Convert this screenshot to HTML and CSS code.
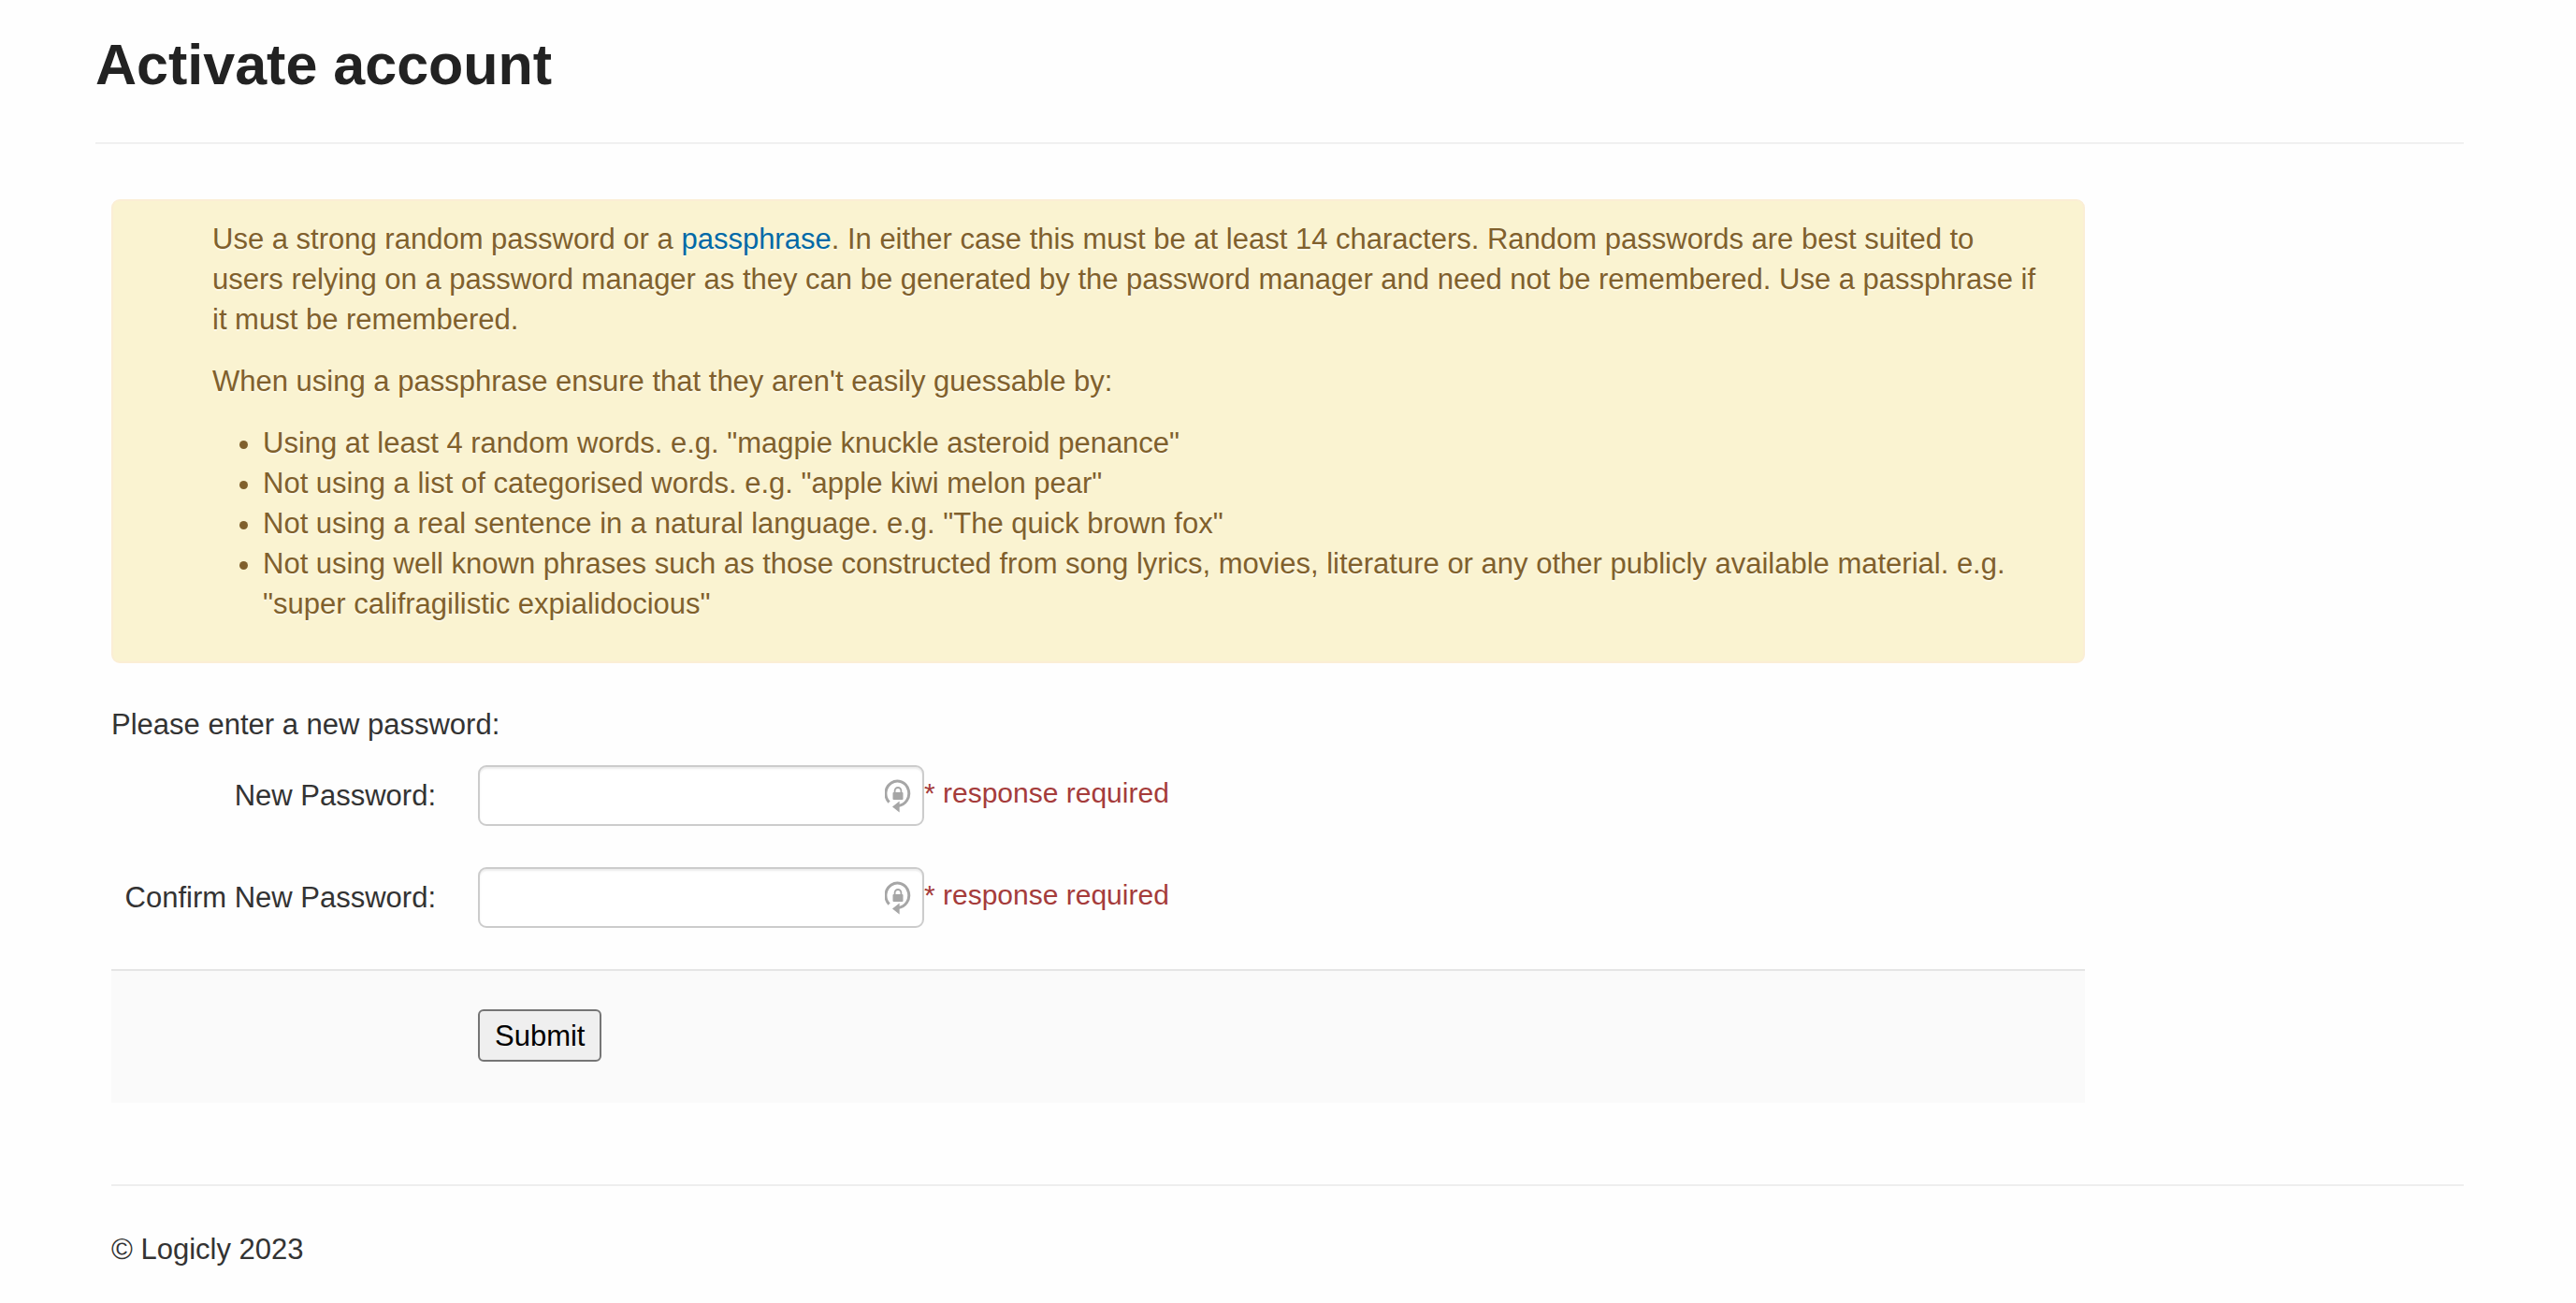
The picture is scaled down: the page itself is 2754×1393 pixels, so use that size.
FILE: index.html
```html
<!DOCTYPE html>
<html lang="en">
<head>
<meta charset="utf-8">
<meta name="viewport" content="width=device-width, initial-scale=1">
<title>Activate account</title>
<link rel="stylesheet" href="styles.css">
</head>
<body>
<svg class="sprite" aria-hidden="true">
  <symbol id="lock-cycle" viewBox="0 0 28 36">
    <path d="M4.6 24.6A12.4 13.2 0 1 1 14 28.4" fill="none" stroke="currentColor" stroke-width="3"/>
    <path d="M8 29.5 15.6 23.5v12z" fill="currentColor"/>
    <path d="M10.6 15v-2.600a3.400 3.400 0 0 1 6.800 0v2.600" fill="none" stroke="currentColor" stroke-width="1.800"/>
    <rect x="8.500" y="14" width="11" height="8" rx="1" fill="currentColor"/>
  </symbol>
</svg>
<div class="page">
  <header class="page-header">
    <h1>Activate account</h1>
  </header>

  <main class="content">
    <section class="notice">
      <p>Use a strong random password or a <a href="#">passphrase</a>. In either case this must be at least 14 characters. Random passwords are best suited to users relying on a password manager as they can be generated by the password manager and need not be remembered. Use a passphrase if it must be remembered.</p>
      <p>When using a passphrase ensure that they aren't easily guessable by:</p>
      <ul>
        <li>Using at least 4 random words. e.g. "magpie knuckle asteroid penance"</li>
        <li>Not using a list of categorised words. e.g. "apple kiwi melon pear"</li>
        <li>Not using a real sentence in a natural language. e.g. "The quick brown fox"</li>
        <li>Not using well known phrases such as those constructed from song lyrics, movies, literature or any other publicly available material. e.g. "super califragilistic expialidocious"</li>
      </ul>
    </section>

    <form class="password-form">
      <p class="prompt">Please enter a new password:</p>
      <div class="field">
        <label for="new-password">New Password:</label>
        <div class="control">
          <input type="password" id="new-password" aria-describedby="new-error">
          <svg class="control-icon" aria-hidden="true"><use href="#lock-cycle"/></svg>
        </div>
        <span class="error" id="new-error">* response required</span>
      </div>
      <div class="field">
        <label for="confirm-password">Confirm New Password:</label>
        <div class="control">
          <input type="password" id="confirm-password" aria-describedby="confirm-error">
          <svg class="control-icon" aria-hidden="true"><use href="#lock-cycle"/></svg>
        </div>
        <span class="error" id="confirm-error">* response required</span>
      </div>
      <div class="actions">
        <button type="submit">Submit</button>
      </div>
    </form>
  </main>

  <footer class="page-footer">© Logicly 2023</footer>
</div>
</body>
</html>
```

FILE: styles.css
```css
*,
*::before,
*::after {
  box-sizing: border-box;
}

body {
  margin: 0;
  background: #fefefe;
  color: #333;
  font-family: "Liberation Sans", Helvetica, Arial, sans-serif;
  font-size: 31px;
  line-height: 43px;
}

.sprite {
  display: none;
}

.page {
  padding: 26px 120px 0 102px;
}

.page-header {
  padding-bottom: 40px;
  border-bottom: 2px solid #f0f0f0;
}

h1 {
  margin: 0;
  color: #222;
  font-size: 61px;
  line-height: 86px;
}

.content {
  width: 84%;
  margin-top: 59px;
  padding-left: 17px;
}

.notice {
  padding: 19px 48px 17px 106px;
  border: 2px solid #fbeed5;
  border-radius: 9px;
  background: #faf3d1;
  color: #80602c;
  text-shadow: 0 2px 0 rgba(255, 255, 255, 0.5);
}

.notice p {
  margin: 0 0 23px;
}

.notice ul {
  margin: 0 0 23px;
  padding-left: 54px;
}

.notice a {
  color: #0069a6;
  text-decoration: none;
}

.prompt {
  margin: 44px 0 22px;
}

.field {
  display: flex;
  align-items: center;
  margin-bottom: 44px;
}

.field label {
  width: 347px;
  margin-right: 45px;
  text-align: right;
}

.control {
  position: relative;
  width: 477px;
}

.control input {
  display: block;
  width: 100%;
  height: 65px;
  padding: 8px 52px 8px 12px;
  border: 2px solid #ccc;
  border-radius: 9px;
  background: #fff;
  box-shadow: inset 0 2px 2px rgba(0, 0, 0, 0.08);
  font: inherit;
}

.control-icon {
  position: absolute;
  top: 15px;
  right: 14px;
  width: 28px;
  height: 36px;
  color: #a6a6a6;
}

.error {
  padding-bottom: 6px;
  color: #a53c3b;
  font-size: 30px;
}

.actions {
  padding: 41px 0 44px 392px;
  border-top: 2px solid #e5e5e5;
  background: #fafafa;
}

.actions button {
  display: block;
  height: 56px;
  padding: 0 16px;
  border: 2px solid #757575;
  border-radius: 6px;
  background: #efefef;
  color: #000;
  font: inherit;
}

.page-footer {
  margin: 87px 0 0 17px;
  padding: 46px 0 24px;
  border-top: 2px solid #eee;
}
```
